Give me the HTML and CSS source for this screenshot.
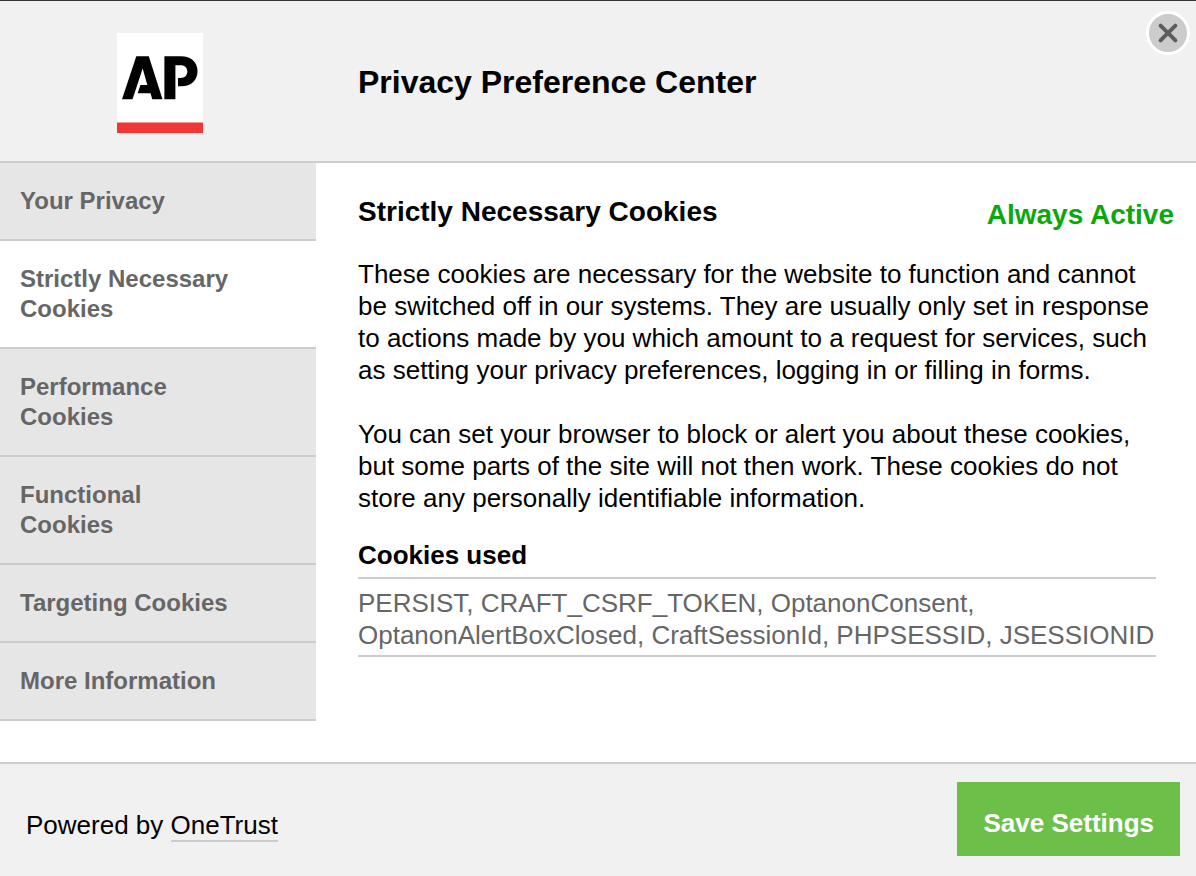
FILE: index.html
```html
<!DOCTYPE html>
<html lang="en">
<head>
<meta charset="utf-8">
<title>Privacy Preference Center</title>
<link rel="stylesheet" href="styles.css">
</head>
<body>
<div class="dialog" role="dialog" aria-labelledby="dialog-title">
  <header class="header">
    <div class="brand">
      <svg class="logo" viewBox="0 0 86 100" role="img" aria-label="AP">
        <rect width="86" height="100" fill="#fff"/>
        <rect y="89.500" width="86" height="10.500" fill="#f13635"/>
        <path d="M19.300 23.200H31.800L45.500 66.200H35.300L33.500 60.300H20.700L23.400 52H30.300L25.700 35.500L15.500 66.200H5Z"/>
        <path d="M47.400 23.200H64C74 23.200 80.500 29 80.500 38C80.500 47.500 74 53.300 64.500 53.300H61V45H63.500C67.800 45 70.300 42.200 70.300 38.500C70.300 34.500 67.800 32.200 63.500 32.200H58.400V66.200H47.400Z"/>
      </svg>
    </div>
    <h1 class="title" id="dialog-title">Privacy Preference Center</h1>
    <button class="close" type="button" aria-label="Close">
      <svg class="close-icon" viewBox="0 0 44 44" aria-hidden="true">
        <circle cx="22" cy="22" r="20.500" fill="#ccc" stroke="#fff" stroke-width="3"/>
        <path d="M14.600 14.600L29.400 29.400M29.400 14.600L14.600 29.400" stroke="#5d5d5d" stroke-width="4" stroke-linecap="round"/>
      </svg>
    </button>
  </header>
  <main class="body">
    <nav class="tabs" aria-label="Cookie categories">
      <button class="tab" type="button">Your Privacy</button>
      <button class="tab tab-active" type="button" aria-current="true">Strictly Necessary Cookies</button>
      <button class="tab" type="button">Performance Cookies</button>
      <button class="tab" type="button">Functional Cookies</button>
      <button class="tab" type="button">Targeting Cookies</button>
      <button class="tab" type="button">More Information</button>
    </nav>
    <section class="panel">
      <div class="panel-head">
        <h2 class="heading">Strictly Necessary Cookies</h2>
        <span class="status">Always Active</span>
      </div>
      <div class="copy">
        <div class="description">
          <p>These cookies are necessary for the website to function and cannot be switched off in our systems. They are usually only set in response to actions made by you which amount to a request for services, such as setting your privacy preferences, logging in or filling in forms.</p>
          <p>You can set your browser to block or alert you about these cookies, but some parts of the site will not then work. These cookies do not store any personally identifiable information.</p>
        </div>
        <h3 class="subheading">Cookies used</h3>
        <p class="cookie-list">PERSIST, CRAFT_CSRF_TOKEN, OptanonConsent, OptanonAlertBoxClosed, CraftSessionId, PHPSESSID, JSESSIONID</p>
      </div>
    </section>
  </main>
  <footer class="footer">
    <p class="powered">Powered by <a class="powered-link" href="#">OneTrust</a></p>
    <button class="save" type="button">Save Settings</button>
  </footer>
</div>
</body>
</html>
```
FILE: styles.css
```css
* {
  box-sizing: border-box;
}

body {
  margin: 0;
  background: #fff;
  color: #000;
  font-family: "Liberation Sans", Arial, sans-serif;
  font-size: 26px;
  line-height: 32px;
}

h1, h2, h3, p {
  margin: 0;
}

button {
  font-family: inherit;
  cursor: pointer;
}

.dialog {
  display: flex;
  flex-direction: column;
  min-height: 100vh;
  border-top: 1px solid #343434;
}

.header {
  position: relative;
  display: flex;
  align-items: center;
  padding: 32px 0 28px;
  background: #f1f1f1;
  border-bottom: 2px solid #ccc;
}

.brand {
  display: flex;
  flex: 0 0 320px;
  justify-content: center;
}

.logo {
  display: block;
  width: 86px;
  height: 100px;
}

.title {
  padding: 0 0 2px 38px;
  font-size: 32px;
  line-height: 40px;
}

.close {
  position: absolute;
  top: 10px;
  right: 6px;
  padding: 0;
  border: 0;
  background: none;
}

.close-icon {
  display: block;
  width: 44px;
  height: 44px;
}

.body {
  display: flex;
  flex: 1;
  align-items: flex-start;
}

.tabs {
  display: flex;
  flex: 0 0 316px;
  flex-direction: column;
}

.tab {
  padding: 23px 80px 23px 20px;
  border: 0;
  border-bottom: 2px solid #ccc;
  background: #e6e6e6;
  color: #666;
  font-size: 24px;
  font-weight: bold;
  line-height: 30px;
  text-align: left;
}

.tab-active {
  background: #fff;
}

.panel {
  flex: 1;
  min-width: 0;
  padding: 33px 22px 32px 42px;
}

.panel-head {
  display: flex;
  align-items: flex-start;
  justify-content: space-between;
  padding-bottom: 27px;
}

.heading {
  font-size: 28px;
  line-height: 32px;
}

.status {
  padding-top: 3px;
  color: #0aa80a;
  font-size: 28px;
  font-weight: bold;
  line-height: 32px;
}

.copy {
  padding-right: 18px;
}

.description {
  display: grid;
  gap: 32px;
  padding-bottom: 25px;
}

.subheading {
  padding-bottom: 6px;
  border-bottom: 2px solid #ccc;
  font-size: 26px;
}

.cookie-list {
  padding: 8px 0 4px;
  border-bottom: 2px solid #ccc;
  color: #666;
}

.footer {
  display: flex;
  align-items: center;
  justify-content: space-between;
  padding: 18px 16px 20px 26px;
  background: #f1f1f1;
  border-top: 2px solid #ccc;
}

.powered {
  padding-top: 12px;
}

.powered-link {
  border-bottom: 2px solid #ccc;
  color: inherit;
  text-decoration: none;
}

.save {
  padding: 25px 26px 17px;
  border: 0;
  background: #6cc04a;
  color: #fff;
  font-size: 26px;
  font-weight: bold;
  line-height: 32px;
}
```
